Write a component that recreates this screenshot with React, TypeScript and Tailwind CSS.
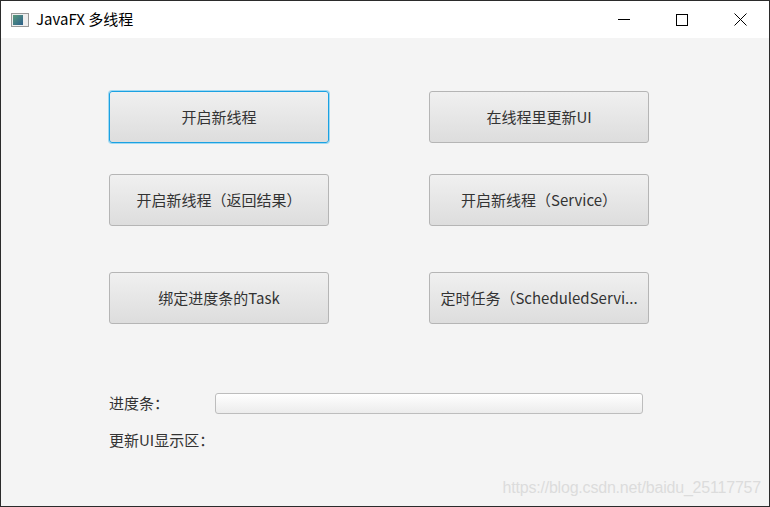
const btn =
  'h-[52px] w-[220px] rounded-[3px] border border-[#b5b5b5] bg-gradient-to-b from-[#f0f0f0] to-[#dddddd] text-[15px] text-[#333] truncate px-2'

export default function App() {
  return (
    <div
      className="flex h-[507px] w-[770px] flex-col border-x border-b border-[#2b2b2b] bg-[#f4f4f4]"
      style={{ fontFamily: '"Noto Sans CJK SC", "Noto Sans", sans-serif' }}
    >
      <div className="flex h-[38px] shrink-0 items-center border-t border-[#2b2b2b] bg-white pl-[10px] text-[15px] text-black">
        <div className="mr-[7px] flex h-[14px] w-[18px] items-center border border-[#999] bg-[#eee] p-[1px]">
          <div className="h-full w-[10px] bg-gradient-to-br from-[#5a9a7a] to-[#2e5f8a]" />
        </div>
        <span>JavaFX 多线程</span>
        <div className="ml-auto flex h-full">
          <div className="flex w-[58px] items-center justify-center">
            <div className="h-px w-[12px] bg-black" />
          </div>
          <div className="flex w-[58px] items-center justify-center">
            <div className="h-[12px] w-[12px] border border-black" />
          </div>
          <div className="flex w-[58px] items-center justify-center">
            <svg width="13" height="13" viewBox="0 0 13 13" stroke="black" strokeWidth="1">
              <path d="M0.5 0.5L12.5 12.5M12.5 0.5L0.5 12.5" />
            </svg>
          </div>
        </div>
      </div>

      <div className="relative flex-1 pl-[108px] pt-[53px]">
        <div className="flex gap-[100px]">
          <button className={btn + ' !border-[#1ba1e2] ring-1 ring-[#9fd9f2]'}>开启新线程</button>
          <button className={btn}>在线程里更新UI</button>
        </div>
        <div className="mt-[31px] flex gap-[100px]">
          <button className={btn}>开启新线程（返回结果）</button>
          <button className={btn}>开启新线程（Service）</button>
        </div>
        <div className="mt-[46px] flex gap-[100px]">
          <button className={btn}>绑定进度条的Task</button>
          <button className={btn}>定时任务（ScheduledServi...</button>
        </div>
        <div className="mt-[68px] flex items-center text-[15px] text-[#333]">
          <span className="w-[106px]">进度条：</span>
          <div className="h-[21px] w-[428px] rounded-[3px] border border-[#bdbdbd] bg-gradient-to-b from-white to-[#ececec]" />
        </div>
        <div className="mt-[14px] text-[15px] text-[#333]">更新UI显示区：</div>
        <div
          className="absolute bottom-[6px] right-[8px] text-[16px] tracking-[-0.2px] text-[#dcdcdc]"
          style={{ fontFamily: '"Liberation Sans", sans-serif' }}
        >
          https://blog.csdn.net/baidu_25117757
        </div>
      </div>
    </div>
  )
}
